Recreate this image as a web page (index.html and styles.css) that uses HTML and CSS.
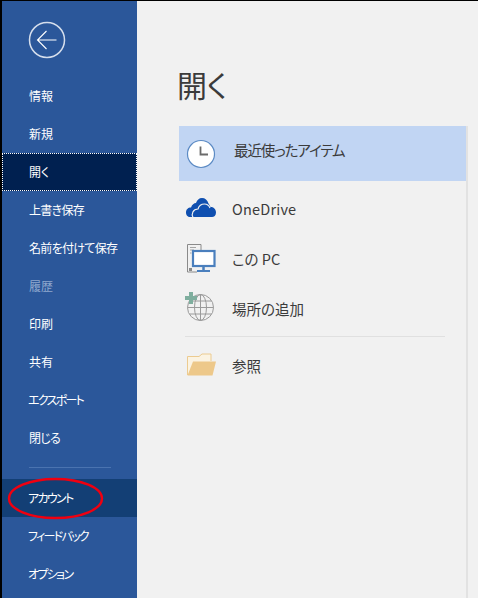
FILE: index.html
```html
<!DOCTYPE html>
<html lang="ja">
<head>
    <meta charset="UTF-8">
    <title>開く</title>
    <link rel="stylesheet" href="styles.css">
</head>
<body>
    <div class="window">
        <nav class="sidebar">
            <div class="back">
                <svg width="38" height="38" viewBox="0 0 38 38" fill="none" stroke="#fff">
                    <circle cx="19" cy="19" r="17.5" stroke="#d5deec" stroke-width="1.5"/>
                    <path d="M9.5 19H28.5M18.5 10L9.5 19L18.5 28" stroke-width="1.1"/>
                </svg>
            </div>
            <a class="nav-item">情報</a>
            <a class="nav-item">新規</a>
            <a class="nav-item current">開く</a>
            <a class="nav-item mixed">上書き保存</a>
            <a class="nav-item mixed">名前を付けて保存</a>
            <a class="nav-item disabled">履歴</a>
            <a class="nav-item">印刷</a>
            <a class="nav-item">共有</a>
            <a class="nav-item kana">エクスポート</a>
            <a class="nav-item mixed">閉じる</a>
            <div class="nav-sep"></div>
            <a class="nav-item hover kana">アカウント</a>
            <a class="nav-item kana">フィードバック</a>
            <a class="nav-item kana">オプション</a>
        </nav>
        <main class="content">
            <h1>開く</h1>
            <div class="places">
                <div class="place selected">
                    <svg class="place-icon" width="32" height="32" viewBox="0 0 32 32">
                        <circle cx="16" cy="16" r="13.5" fill="#fff" stroke="#5b8ac4" stroke-width="1.2"/>
                        <path d="M15.5 8.500V16.500H23" fill="none" stroke="#6b6b6b" stroke-width="1.8"/>
                    </svg>
                    <span class="recent-label">最近使ったアイテム</span>
                </div>
                <div class="place">
                    <svg class="place-icon" width="32" height="32" viewBox="0 0 32 32">
                        <path d="M5 25C2 25 1 22.500 1 20.500C1 17.500 3 15.500 6 15.500C7 12.500 9 11 11 11C12 8 14 6 17 6C20 6 22.500 8 23.500 11.500C24.500 13 25 14 25.500 15C28.500 15 31 17 31 20.500C31 23.500 29 25 27 25Z" fill="#0f4fb0"/>
                        <path d="M8 25.500C6 22 8 17 13 17C14 13.500 17 12 19.500 12C22 12 24 13.500 25 16" fill="none" stroke="#f1f1f1" stroke-width="1.200"/>
                    </svg>
                    <span class="latin">OneDrive</span>
                </div>
                <div class="place">
                    <svg class="place-icon" width="32" height="32" viewBox="0 0 32 32">
                        <path d="M2.500 2.500H16V8M2.500 2.500V30H12" fill="#f1f1f1" stroke="#8a8a8a"/>
                        <path d="M5 5.500H11M5 8H9M5 11H6.500" stroke="#a5a5a5"/>
                        <rect x="4" y="26" width="3" height="3" fill="#8a8a8a"/>
                        <rect x="8" y="9" width="21.500" height="15" fill="#fff" stroke="#4a7fbd" stroke-width="2.200"/>
                        <path d="M18.500 25V28" stroke="#4a7fbd" stroke-width="2.500"/>
                        <path d="M12 29H25" stroke="#4a7fbd" stroke-width="2"/>
                    </svg>
                    <span>この PC</span>
                </div>
                <div class="place">
                    <svg class="place-icon" width="32" height="32" viewBox="0 0 32 32" fill="none">
                        <g stroke="#9a9a9a" stroke-width="1">
                            <circle cx="15.500" cy="15.500" r="13"/>
                            <ellipse cx="15.500" cy="15.500" rx="6" ry="13"/>
                            <path d="M15.500 2.500V28.500M2.500 15.500H28.500M4.500 9H26.500M4.500 22H26.500"/>
                        </g>
                        <path d="M4 0H8V4H12V8H8V12H4V8H0V4H4Z" fill="#7fae9e"/>
                    </svg>
                    <span>場所の追加</span>
                </div>
                <div class="place-sep"></div>
                <div class="place">
                    <svg class="place-icon" width="32" height="32" viewBox="0 0 32 32">
                        <path d="M2.500 26V7.500H14L17 5H26V12" fill="#fbf3e2" stroke="#eccb90"/>
                        <path d="M2.500 26.500L8 12.500H31L27.500 26.500Z" fill="#edc88a"/>
                    </svg>
                    <span>参照</span>
                </div>
            </div>
        </main>
    </div>
    <svg class="annotation" width="98" height="44" viewBox="0 0 98 44">
        <ellipse cx="48.500" cy="21.500" rx="46.500" ry="19.500" fill="none" stroke="#f00010" stroke-width="2.400"/>
    </svg>
</body>
</html>
```

FILE: styles.css
```css
html, body {
    margin: 0;
    height: 100%;
    overflow: hidden;
}
body {
    font-family: "Noto Sans CJK JP", "Noto Sans", sans-serif;
    font-feature-settings: "palt";
    background: #000;
    position: relative;
}
.window {
    display: flex;
    height: 597px;
    margin: 1px 0 0 2px;
    background: #f1f1f1;
}
.sidebar {
    width: 135px;
    flex: none;
    background: #2b579a;
    display: flex;
    flex-direction: column;
}
.back {
    height: 76px;
    flex: none;
    padding: 20px 0 0 26px;
    box-sizing: border-box;
}
.nav-item {
    display: flex;
    align-items: center;
    height: 38px;
    flex: none;
    box-sizing: border-box;
    padding: 0 0 2px 27px;
    color: #fff;
    font-size: 12px;
}
.nav-item.mixed {
    letter-spacing: -0.7px;
}
.nav-item.kana {
    padding-left: 26px;
    letter-spacing: -1.7px;
}
.nav-item.current {
    background: #002050;
    border: 1px dotted #fff;
    padding-left: 26px;
}
.nav-item.disabled {
    color: #8fa8cd;
}
.nav-item.hover {
    background: #133f75;
}
.nav-sep {
    height: 1px;
    width: 82px;
    margin: 10px 0 11px 27px;
    flex: none;
    background: #4a73b0;
}
.content {
    flex: 1;
    padding-left: 42px;
}
h1 {
    margin: 0 0 0 -2px;
    height: 125px;
    box-sizing: border-box;
    padding-top: 60px;
    font-size: 30px;
    font-weight: 400;
    line-height: 46px;
    color: #3b3b3b;
}
.places {
    width: 289px;
    height: 472px;
    border-right: 2px solid #e2e2e2;
    box-sizing: border-box;
    color: #3b3b3b;
    font-size: 14.500px;
}
.place {
    display: flex;
    align-items: center;
    height: 50px;
    gap: 15px;
    padding-left: 6px;
}
.place.selected {
    height: 55px;
    margin-bottom: 2px;
    background: #c1d5f3;
    gap: 17px;
}
.recent-label {
    padding-bottom: 9px;
    letter-spacing: -1.100px;
}
.latin {
    letter-spacing: 0.2px;
}
.place-sep {
    height: 1px;
    width: 260px;
    margin: 3px 0 3px 6px;
    background: #e0e0e0;
}
.annotation {
    position: absolute;
    left: 7px;
    top: 477px;
}
```
